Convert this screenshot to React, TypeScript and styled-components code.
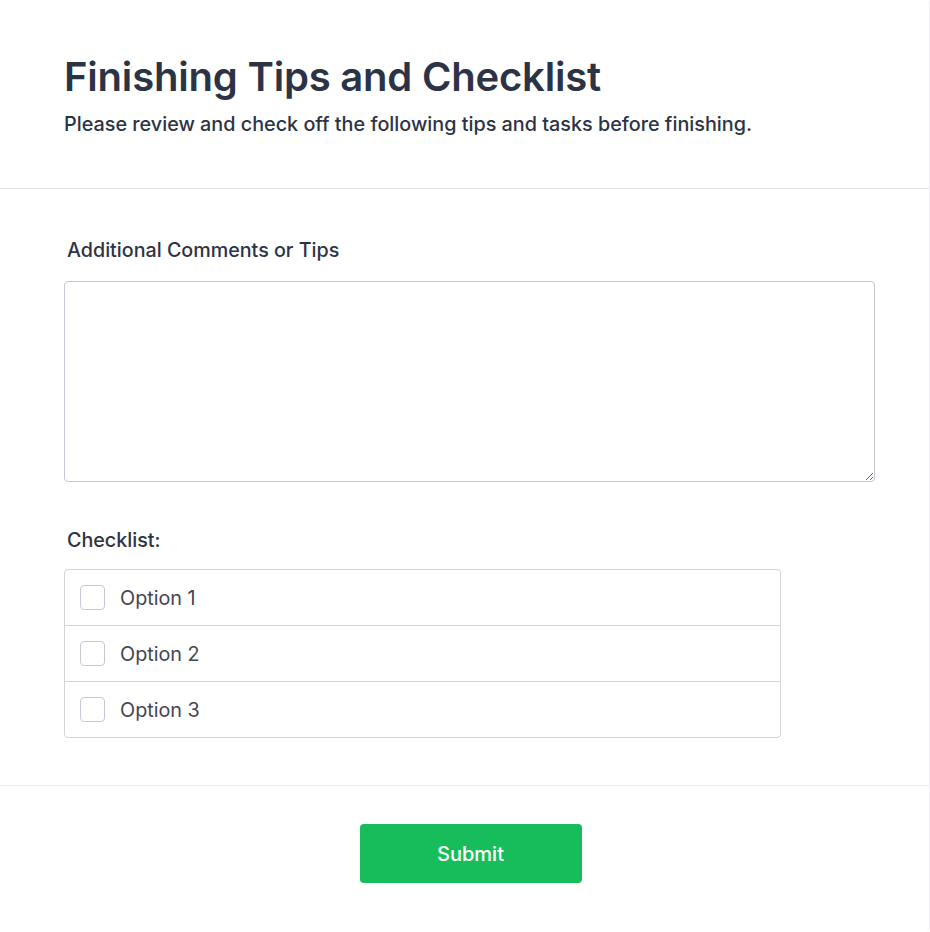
import React from 'react';
import styled, {createGlobalStyle} from "styled-components";

const GlobalStyle = createGlobalStyle`
    * {
        box-sizing: border-box;
    }
    body {
        margin: 0;
        background: #ffffff;
        font-family: Inter, "Noto Sans", sans-serif;
    }
`

const options = ['Option 1', 'Option 2', 'Option 3']

export default function App() {
    return (
        <>
            <GlobalStyle/>
            <Card>
                <Header>
                    <Title>Finishing Tips and Checklist</Title>
                    <Subtitle>Please review and check off the following tips and tasks before finishing.</Subtitle>
                </Header>

                <Body>
                    <Field $gap={17}>
                        <Label htmlFor="comments">Additional Comments or Tips</Label>
                        <TextArea id="comments"/>
                    </Field>

                    <Field $gap={15}>
                        <Label as="span">Checklist:</Label>
                        <CheckList>
                            {options.map(o => (
                                <CheckRow key={o}>
                                    <Box type="checkbox"/>
                                    <OptionText>{o}</OptionText>
                                </CheckRow>
                            ))}
                        </CheckList>
                    </Field>
                </Body>

                <Footer>
                    <SubmitButton type="button">Submit</SubmitButton>
                </Footer>
            </Card>
        </>
    );
}

const Card = styled.div`
    width: 930px;
    min-height: 932px;
    background: #ffffff;
    border-right: 1px solid #f1f1f5;
    border-top-right-radius: 4px;
    border-bottom-right-radius: 4px;
`

const Header = styled.header`
    padding: 53px 64px 50px;
    border-bottom: 1px solid #dfe1e8;
`

const Title = styled.h1`
    margin: 0;
    font-size: 40px;
    line-height: 48px;
    font-weight: 600;
    color: #2c3345;
    letter-spacing: -0.2px;
`

const Subtitle = styled.p`
    margin: 9px 0 0;
    font-size: 19.8px;
    line-height: 28px;
    font-weight: 500;
    color: #2c3345;
`

const Body = styled.main`
    padding: 47px 55px 47px 64px;
    display: flex;
    flex-direction: column;
    gap: 44px;
    border-bottom: 1px solid #e9eaef;
`

const Field = styled.div<{ $gap: number }>`
    display: flex;
    flex-direction: column;
    gap: ${props => props.$gap}px;
`

const Label = styled.label`
    padding-left: 3px;
    font-size: 19.7px;
    line-height: 28px;
    font-weight: 500;
    color: #2c3345;
`

const TextArea = styled.textarea`
    width: 811px;
    height: 201px;
    border: 1px solid #c3c7d3;
    border-radius: 4px;
    resize: vertical;
    font: inherit;
    padding: 10px 12px;
    outline: none;
`

const CheckList = styled.div`
    width: 717px;
    border: 1px solid #d3d3d8;
    border-radius: 4px;
`

const CheckRow = styled.label`
    display: flex;
    align-items: center;
    gap: 15px;
    height: 55px;
    padding: 0 15px;
    & + & {
        border-top: 1px solid #d3d3d8;
        height: 56px;
    }
`

const Box = styled.input`
    appearance: none;
    margin: 0;
    width: 25px;
    height: 25px;
    border: 1px solid #c6c9d3;
    border-radius: 4px;
    background: #ffffff;
`

const OptionText = styled.span`
    font-size: 19.8px;
    color: #454550;
`

const Footer = styled.footer`
    display: flex;
    justify-content: center;
    padding: 38px 0 38px 12px;
`

const SubmitButton = styled.button`
    width: 222px;
    height: 59px;
    border: none;
    border-radius: 4px;
    background: #18bd5b;
    color: #ffffff;
    font-family: Inter, "Noto Sans", sans-serif;
    font-size: 20px;
    font-weight: 500;
    cursor: pointer;
`
